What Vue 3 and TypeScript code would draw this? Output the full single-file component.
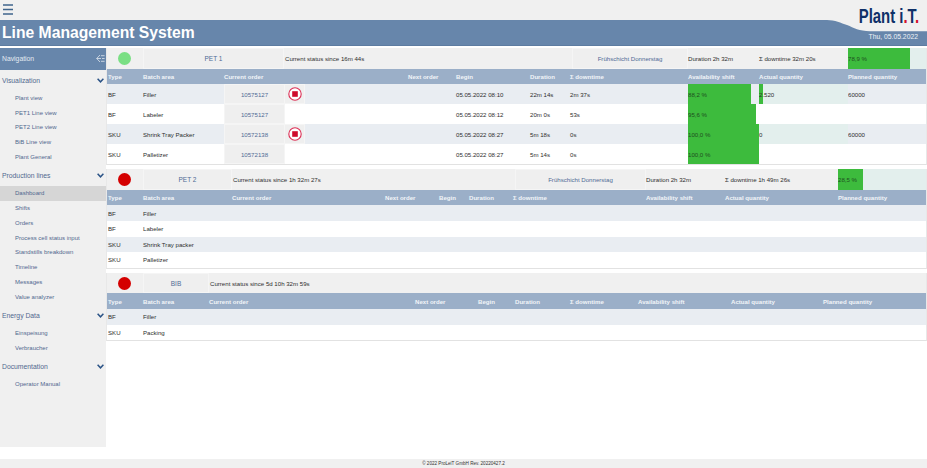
<script setup lang="ts">
interface Row {
  type: string
  area: string
  order?: string
  stop?: boolean
  begin?: string
  duration?: string
  downtime?: string
  avail?: number
  actual?: string
  actualPct?: number
  planned?: string
}
interface Line {
  name: string
  ok: boolean
  status: string
  shift?: string
  duration?: string
  downtime?: string
  pct?: number
  top: string
  cols: string
  compact: boolean
  rows: Row[]
}

const groups = [
  { title: 'Visualization', items: ['Plant view', 'PET1 Line view', 'PET2 Line view', 'BiB Line view', 'Plant General'] },
  { title: 'Production lines', items: ['Dashboard', 'Shifts', 'Orders', 'Process cell status input', 'Standstills breakdown', 'Timeline', 'Messages', 'Value analyzer'] },
  { title: 'Energy Data', items: ['Einspeisung', 'Verbraucher'] },
  { title: 'Documentation', items: ['Operator Manual'] },
]

const heads = ['Type', 'Batch area', 'Current order', '', 'Next order', 'Begin', 'Duration', 'Σ downtime', 'Availability shift', 'Actual quantity', 'Planned quantity']

const lines: Line[] = [
  {
    name: 'PET 1', ok: true, status: 'Current status since 16m 44s', shift: 'Frühschicht Donnerstag',
    duration: 'Duration 2h 32m', downtime: 'Σ downtime 32m 20s', pct: 78.9,
    top: '36px 141px 288px 116px 71px 89px 78px',
    cols: '36px 81px 60px 124px 48px 74px 40px 118px 71px 89px 78px',
    compact: false,
    rows: [
      { type: 'BF', area: 'Filler', order: '10575127', stop: true, begin: '05.05.2022 08:10', duration: '22m 14s', downtime: '2m 37s', avail: 88.2, actual: '2.520', actualPct: 4.2, planned: '60000' },
      { type: 'BF', area: 'Labeler', order: '10575127', begin: '05.05.2022 08:12', duration: '20m 0s', downtime: '53s', avail: 95.6 },
      { type: 'SKU', area: 'Shrink Tray Packer', order: '10572138', stop: true, begin: '05.05.2022 08:27', duration: '5m 18s', downtime: '0s', avail: 100, actual: '0', actualPct: 0, planned: '60000' },
      { type: 'SKU', area: 'Palletizer', order: '10572138', begin: '05.05.2022 08:27', duration: '5m 14s', downtime: '0s', avail: 100 },
    ],
  },
  {
    name: 'PET 2', ok: false, status: 'Current status since 1h 32m 27s', shift: 'Frühschicht Donnerstag',
    duration: 'Duration 2h 32m', downtime: 'Σ downtime 1h 49m 26s', pct: 28.5,
    top: '36px 89px 283px 131px 79px 113px 88px',
    cols: '36px 89px 153px 0px 54px 30px 44px 133px 79px 113px 88px',
    compact: true,
    rows: [
      { type: 'BF', area: 'Filler' },
      { type: 'BF', area: 'Labeler' },
      { type: 'SKU', area: 'Shrink Tray packer' },
      { type: 'SKU', area: 'Palletizer' },
    ],
  },
  {
    name: 'BIB', ok: false, status: 'Current status since 5d 10h 32m 59s',
    top: '36px 66px 717px',
    cols: '36px 66px 206px 0px 63px 37px 55px 68px 93px 92px 103px',
    compact: true,
    rows: [
      { type: 'BF', area: 'Filler' },
      { type: 'SKU', area: 'Packing' },
    ],
  },
]
</script>

<template>
  <div class="page">
    <div class="topbar">
      <svg class="burger" width="10" height="11" viewBox="0 0 10 11">
        <path d="M0 1h10M0 5.5h10M0 10h10" stroke="#3f648c" stroke-width="1.3" />
      </svg>
    </div>

    <header class="band">
      <h1>Line Management System</h1>
      <svg class="curve" width="100" height="12" viewBox="0 0 100 12">
        <path d="M0 0 C8 0 14 3 20 5 C27 8 32 11 43 11.3 L100 11.3 L100 0 Z" fill="#f0f0f0" />
      </svg>
      <div class="logo">Plant <span class="logo-it">i<i>.</i>T<i>.</i></span></div>
      <div class="date">Thu, 05.05.2022</div>
    </header>

    <div class="body">
      <aside class="side">
        <div class="nav-head">
          <span>Navigation</span>
          <svg width="9" height="9" viewBox="0 0 9 9" fill="none" stroke="#dfe6ee" stroke-width=".8">
            <path d="M4 1 L.7 4.5 L4 8 M.7 4.5 H5 M5 1.7 H8.6 M6 4.5 H8.6 M5 7.3 H8.6" />
          </svg>
        </div>
        <div v-for="g in groups" :key="g.title" class="group">
          <div class="group-title">
            <span>{{ g.title }}</span>
            <svg width="7" height="5" viewBox="0 0 7 5" fill="none" stroke="#2c5487" stroke-width="1.5">
              <path d="M.6 .8 L3.5 3.8 L6.4 .8" />
            </svg>
          </div>
          <a v-for="it in g.items" :key="it" class="item" :class="{ active: it === 'Dashboard' }">{{ it }}</a>
        </div>
      </aside>

      <main class="main">
        <section v-for="l in lines" :key="l.name" class="line" :class="{ compact: l.compact }">
          <div class="line-top" :style="{ gridTemplateColumns: l.top }">
            <div class="dot-cell"><span class="dot" :class="l.ok ? 'green' : 'red'"></span></div>
            <div class="name box">{{ l.name }}</div>
            <div class="txt status">{{ l.status }}</div>
            <template v-if="l.shift">
              <div class="name shift box">{{ l.shift }}</div>
              <div class="txt">{{ l.duration }}</div>
              <div class="txt">{{ l.downtime }}</div>
              <div class="bar-cell">
                <div class="bar" :style="{ width: l.pct + '%' }"></div>
                <span class="bar-label">{{ String(l.pct).replace('.', ',') }} %</span>
              </div>
            </template>
          </div>

          <div class="row head" :style="{ gridTemplateColumns: l.cols }">
            <div v-for="(h, i) in heads" :key="i" class="cell" :class="{ hidden: i === 3 }">{{ h }}</div>
          </div>

          <div v-for="(r, i) in l.rows" :key="i" class="row body-row" :class="{ odd: i % 2 === 0 }" :style="{ gridTemplateColumns: l.cols }">
            <div class="cell">{{ r.type }}</div>
            <div class="cell">{{ r.area }}</div>
            <div class="cell order-cell"><span v-if="r.order" class="box order">{{ r.order }}</span></div>
            <div class="cell btn-cell">
              <span v-if="r.stop" class="stop box">
                <svg width="14" height="14" viewBox="0 0 14 14">
                  <circle cx="7" cy="7" r="6.2" fill="#fff" stroke="#dc2f55" stroke-width="1.1" />
                  <rect x="4.2" y="4.2" width="5.6" height="5.6" fill="#cf0a2c" />
                </svg>
              </span>
            </div>
            <div class="cell"></div>
            <div class="cell">{{ r.begin }}</div>
            <div class="cell">{{ r.duration }}</div>
            <div class="cell">{{ r.downtime }}</div>
            <div class="cell bar-cell plain">
              <template v-if="r.avail !== undefined">
                <div class="bar" :style="{ width: r.avail + '%' }"></div>
                <span class="bar-label">{{ r.avail.toFixed(1).replace('.', ',') }} %</span>
              </template>
            </div>
            <div class="cell bar-cell" :class="{ plain: r.actual === undefined }">
              <template v-if="r.actual !== undefined">
                <div class="bar" :style="{ width: r.actualPct + '%' }"></div>
                <span class="bar-label qty">{{ r.actual }}</span>
              </template>
            </div>
            <div class="cell">{{ r.planned }}</div>
          </div>
        </section>
      </main>
    </div>

    <footer class="foot">© 2022 ProLeiT GmbH Rev. 20220427.2</footer>
  </div>
</template>

<style scoped>
.page {
  width: 927px;
  height: 468px;
  display: flex;
  flex-direction: column;
  overflow: hidden;
  background: #fff;
  font-family: "Liberation Sans", Arial, sans-serif;
  font-size: 6.1px;
  color: #2e2e2e;
}
.topbar {
  height: 20px;
  flex: none;
  background: #f0f0f0;
  display: flex;
  align-items: flex-start;
  padding: 4px 0 0 3px;
  box-sizing: border-box;
}
.band {
  position: relative;
  height: 26px;
  flex: none;
  background: #6786ab;
  border-bottom: 1px solid #5d7ca1;
  box-sizing: border-box;
  display: flex;
  align-items: center;
  padding-left: 2px;
}
h1 {
  margin: 0;
  font-size: 15.7px;
  font-weight: 700;
  color: #fff;
}
.curve {
  position: absolute;
  right: 0;
  top: 0;
}
.logo {
  position: absolute;
  right: 8px;
  top: -16px;
  font-size: 21px;
  line-height: 23px;
  font-weight: 700;
  color: #0f3068;
  white-space: nowrap;
  transform: scaleX(.71);
  transform-origin: right center;
}
.logo-it i {
  color: #d4112c;
  font-style: normal;
}
.date {
  position: absolute;
  right: 9px;
  top: 13px;
  font-size: 6.8px;
  color: #eef2f6;
}
.body {
  flex: 1;
  display: flex;
  align-items: flex-start;
  padding-top: 2px;
  min-height: 0;
}
.side {
  width: 106px;
  height: 399px;
  flex: none;
  background: #f0f0f0;
  color: #51688f;
}
.nav-head {
  height: 21.5px;
  background: #6786ab;
  color: #e4eaf1;
  font-size: 6.8px;
  display: flex;
  align-items: center;
  justify-content: space-between;
  padding: 0 1px 0 2px;
}
.group {
  display: flex;
  flex-direction: column;
}
.group-title {
  height: 21.4px;
  display: flex;
  align-items: center;
  justify-content: space-between;
  padding: 0 2px;
  font-size: 6.8px;
  box-sizing: border-box;
}
.item {
  height: 14.8px;
  line-height: 14.8px;
  padding-left: 15px;
  font-size: 6px;
}
.item.active {
  background: #d6d6d6;
}
.main {
  flex: 1;
  min-width: 0;
  padding-left: 1px;
  display: flex;
  flex-direction: column;
  gap: 4px;
}
.line {
  width: 819px;
  border-bottom: 1px solid #e2e2e2;
  border-right: 1px solid #e8e8e8;
  border-left: 1px solid #e8e8e8;
  box-sizing: content-box;
  margin-left: -1px;
}
.line-top {
  display: grid;
  height: 20.5px;
  background: #f0f0f0;
}
.dot-cell {
  display: flex;
  align-items: center;
  padding-left: 11px;
}
.dot {
  width: 13px;
  height: 13px;
  border-radius: 50%;
}
.dot.green { background: #7adf84; }
.dot.red { background: #d40000; }
.box {
  background: #efefef;
  box-shadow: 0 0 0 1px #f5f5f5;
  color: #4f6b95;
}
.name {
  display: flex;
  align-items: center;
  justify-content: center;
  margin: 1px;
  font-size: 6.5px;
}
.name.shift {
  font-size: 6.1px;
}
.txt {
  display: flex;
  align-items: center;
}
.txt.status {
  padding-left: 1px;
}
.bar-cell {
  position: relative;
  display: flex;
  align-items: center;
  background: #e3efed;
  overflow: hidden;
}
.bar-cell.plain {
  background: transparent;
}
.bar {
  position: absolute;
  left: 0;
  top: 0;
  bottom: 0;
  background: #3dbb3d;
}
.bar-label {
  position: relative;
  color: #1f4f1f;
}
.bar-label.qty {
  color: #2e2e2e;
}
.row {
  display: grid;
}
.head {
  height: 15.7px;
  background: #9bafc8;
  color: #f2f5f8;
  font-weight: 700;
}
.cell {
  display: flex;
  align-items: center;
  white-space: nowrap;
  min-width: 0;
}
.cell:first-child {
  padding-left: 1px;
}
.body-row {
  height: 20px;
  background: #fff;
}
.body-row.odd {
  background: #e9edf2;
}
.compact .body-row {
  height: 15.6px;
}
.order-cell {
  padding: 1px 0 1px 1px;
}
.order {
  flex: 1;
  height: 100%;
  display: flex;
  align-items: center;
  justify-content: center;
}
.stop {
  width: 19px;
  height: 18px;
  display: flex;
  align-items: center;
  justify-content: center;
}
.btn-cell {
  padding-left: 1px;
}
.hidden {
  visibility: hidden;
}
.foot {
  height: 9px;
  flex: none;
  background: #f0f0f0;
  text-align: center;
  font-size: 4.6px;
  line-height: 9px;
  color: #333;
}
</style>
